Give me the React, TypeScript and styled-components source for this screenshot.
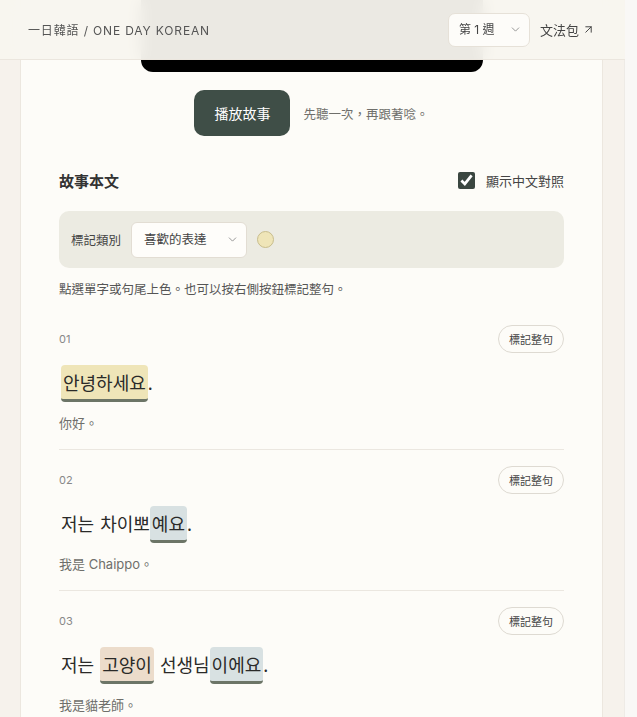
import { useState } from 'react'
import styled, { createGlobalStyle } from 'styled-components'
import { ChevronDown, ArrowUpRight } from 'lucide-react'

type Tone = 'yellow' | 'blue' | 'peach'

interface Token {
  text: string
  tone?: Tone
}

interface Sentence {
  no: string
  tokens: Token[]
  zh: string
}

const sentences: Sentence[] = [
  { no: '01', tokens: [{ text: '안녕하세요', tone: 'yellow' }, { text: '.' }], zh: '你好。' },
  {
    no: '02',
    tokens: [{ text: '저는' }, { text: ' ' }, { text: '차이뽀' }, { text: '예요', tone: 'blue' }, { text: '.' }],
    zh: '我是 Chaippo。',
  },
  {
    no: '03',
    tokens: [
      { text: '저는' },
      { text: ' ' },
      { text: '고양이', tone: 'peach' },
      { text: ' ' },
      { text: '선생님' },
      { text: '이에요', tone: 'blue' },
      { text: '.' },
    ],
    zh: '我是貓老師。',
  },
]

const toneColors: Record<Tone, string> = {
  yellow: '#efe5b8',
  blue: '#d8e1e2',
  peach: '#ecdccb',
}

const GlobalStyle = createGlobalStyle`
  body {
    margin: 0;
    background: #f6f2ec;
    color: #2f2f2d;
    font-family: "Inter", "Noto Sans CJK TC", sans-serif;
  }
  * {
    box-sizing: border-box;
  }
`

const App = () => {
  const [week, setWeek] = useState('1')
  const [category, setCategory] = useState('like')
  const [showZh, setShowZh] = useState(true)

  return (
    <Viewport>
      <GlobalStyle />
      <TopBar>
        <Brand>一日韓語 / ONE DAY KOREAN</Brand>
        <TopActions>
          <SelectWrap>
            <WeekSelect value={week} onChange={(e) => setWeek(e.target.value)}>
              <option value="1">第 1 週</option>
              <option value="2">第 2 週</option>
            </WeekSelect>
            <SelectChevron size={13} strokeWidth={1.6} />
          </SelectWrap>
          <GrammarLink href="#">
            文法包 <ArrowUpRight size={13} strokeWidth={1.8} />
          </GrammarLink>
        </TopActions>
      </TopBar>

      <Page>
        <Card>
          <Player />

          <PlayRow>
            <PlayButton>播放故事</PlayButton>
            <PlayHint>先聽一次，再跟著唸。</PlayHint>
          </PlayRow>

          <SectionHead>
            <SectionTitle>故事本文</SectionTitle>
            <ToggleLabel>
              <Checkbox type="checkbox" checked={showZh} onChange={() => setShowZh((s) => !s)} />
              顯示中文對照
            </ToggleLabel>
          </SectionHead>

          <MarkerPanel>
            <MarkerLabel>標記類別</MarkerLabel>
            <SelectWrap>
              <CategorySelect value={category} onChange={(e) => setCategory(e.target.value)}>
                <option value="like">喜歡的表達</option>
                <option value="hard">不熟的表達</option>
              </CategorySelect>
              <SelectChevron size={13} strokeWidth={1.6} />
            </SelectWrap>
            <Swatch color={toneColors.yellow} />
          </MarkerPanel>

          <Hint>點選單字或句尾上色。也可以按右側按鈕標記整句。</Hint>

          <SentenceList>
            {sentences.map((s) => (
              <SentenceItem key={s.no}>
                <SentenceTop>
                  <SentenceNo>{s.no}</SentenceNo>
                  <MarkButton>標記整句</MarkButton>
                </SentenceTop>
                <Korean>
                  {s.tokens.map((t, i) =>
                    t.tone ? (
                      <Mark key={i} tone={t.tone}>
                        {t.text}
                      </Mark>
                    ) : (
                      <Plain key={i}>{t.text}</Plain>
                    )
                  )}
                </Korean>
                {showZh && <Translation>{s.zh}</Translation>}
              </SentenceItem>
            ))}
          </SentenceList>
        </Card>
      </Page>
    </Viewport>
  )
}

export default App

// scroll area; the right border stands in for the browser's scrollbar gutter
const Viewport = styled.div`
  position: relative;
  height: 100vh;
  overflow-y: auto;
  border-right: 12px solid #f9f8f6;
  box-shadow: inset -1px 0 0 #eeebe6;
`

const TopBar = styled.header`
  position: sticky;
  top: 0;
  z-index: 10;
  height: 60px;
  margin-bottom: -60px;
  display: flex;
  align-items: center;
  justify-content: space-between;
  padding: 0 30px 0 28px;
  background: rgba(248, 245, 239, 0.95);
  backdrop-filter: blur(8px);
  border-bottom: 1px solid #ebe6de;
`

const Brand = styled.div`
  font-size: 12px;
  letter-spacing: 0.85px;
  color: #555;
`

const TopActions = styled.div`
  display: flex;
  align-items: center;
  gap: 10px;
`

const SelectWrap = styled.div`
  position: relative;
  display: flex;
  align-items: center;
`

const SelectChevron = styled(ChevronDown)`
  position: absolute;
  right: 8px;
  color: #888;
  pointer-events: none;
`

const WeekSelect = styled.select`
  appearance: none;
  width: 82px;
  height: 34px;
  padding: 0 24px 0 10px;
  border: 1px solid #e6e1d8;
  border-radius: 7px;
  background: #fdfcf9;
  font-family: "Inter", "Noto Sans CJK TC", sans-serif;
  font-size: 12px;
  color: #444;
`

const GrammarLink = styled.a`
  display: flex;
  align-items: center;
  gap: 3px;
  font-size: 13px;
  color: #444;
  text-decoration: none;
`

const Page = styled.main`
  padding: 0 22px 0 20px;
`

const Card = styled.section`
  display: flex;
  flex-direction: column;
  padding: 0 38px 40px;
  background: #fdfcf8;
  border: 1px solid #ece7df;
  border-top: none;
`

const Player = styled.div`
  align-self: center;
  width: 342px;
  height: 72px;
  background: #000;
  border-radius: 0 0 12px 12px;
`

const PlayRow = styled.div`
  display: flex;
  align-items: center;
  justify-content: center;
  gap: 13px;
  margin-top: 18px;
`

const PlayButton = styled.button`
  width: 96px;
  height: 46px;
  border: none;
  border-radius: 10px;
  background: #3f4e47;
  color: #fff;
  font-family: "Inter", "Noto Sans CJK TC", sans-serif;
  font-size: 14px;
  font-weight: 400;
`

const PlayHint = styled.span`
  font-size: 12.5px;
  color: #6f6f6b;
`

const SectionHead = styled.div`
  display: flex;
  align-items: center;
  justify-content: space-between;
  margin-top: 34px;
  height: 20px;
`

const SectionTitle = styled.h2`
  margin: 0;
  font-size: 15px;
  font-weight: 700;
  color: #333;
`

const ToggleLabel = styled.label`
  display: flex;
  align-items: center;
  gap: 11px;
  font-size: 13px;
  color: #444;
`

const Checkbox = styled.input`
  width: 17px;
  height: 17px;
  margin: 0;
  accent-color: #3a4640;
`

const MarkerPanel = styled.div`
  display: flex;
  align-items: center;
  gap: 10px;
  margin-top: 21px;
  height: 57px;
  padding: 0 12px;
  border-radius: 10px;
  background: #ecebe2;
`

const MarkerLabel = styled.span`
  font-size: 12.5px;
  color: #444;
`

const CategorySelect = styled.select`
  appearance: none;
  width: 116px;
  height: 36px;
  padding: 0 24px 0 12px;
  border: 1px solid #e2ddd3;
  border-radius: 6px;
  background: #fefdfa;
  font-family: "Inter", "Noto Sans CJK TC", sans-serif;
  font-size: 12.5px;
  color: #444;
`

const Swatch = styled.span<{ color: string }>`
  width: 17px;
  height: 17px;
  border-radius: 50%;
  background: ${(p) => p.color};
  border: 1px solid #c8bd8c;
`

const Hint = styled.p`
  margin: 13px 0 0;
  font-size: 12.5px;
  line-height: 18px;
  color: #555;
`

const SentenceList = styled.div`
  display: flex;
  flex-direction: column;
  margin-top: 10px;
`

const SentenceItem = styled.article`
  padding: 16px 0;
  border-bottom: 1px solid #ebe7e0;
`

const SentenceTop = styled.div`
  display: flex;
  align-items: center;
  justify-content: space-between;
`

const SentenceNo = styled.span`
  font-size: 11px;
  color: #888;
`

const MarkButton = styled.button`
  height: 28px;
  padding: 0 10px;
  border: 1px solid #dedad2;
  border-radius: 14px;
  background: #fdfcf8;
  font-family: "Inter", "Noto Sans CJK TC", sans-serif;
  font-size: 11px;
  color: #444;
`

const Korean = styled.div`
  display: flex;
  align-items: center;
  margin-top: 12px;
  padding-left: 2px;
  font-family: "Noto Sans CJK KR", sans-serif;
  font-size: 18px;
  color: #2a2a28;
  white-space: pre;
  word-spacing: 2px;
`

const Plain = styled.span`
  line-height: 28px;
  padding: 3px 0 6px;
`

const Mark = styled.span<{ tone: Tone }>`
  line-height: 28px;
  padding: 3px 2px 3px;
  border-radius: 4px;
  background: ${(p) => toneColors[p.tone]};
  border-bottom: 3px solid #6c7567;
`

const Translation = styled.p`
  margin: 11px 0 0;
  font-size: 13px;
  line-height: 20px;
  color: #6f6f6b;
`
